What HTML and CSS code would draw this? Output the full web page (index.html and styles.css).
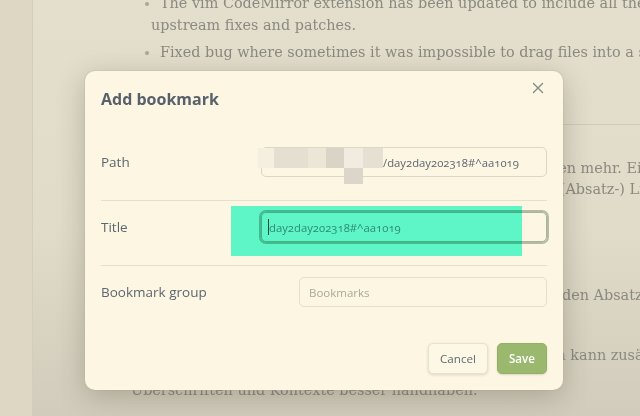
FILE: index.html
```html
<!DOCTYPE html>
<html>
<head>
<meta charset="utf-8">
<link rel="stylesheet" href="styles.css">
</head>
<body>
<div class="app">
  <aside class="gutter"></aside>
  <main class="doc">
    <ul class="changes">
      <li>The vim CodeMirror extension has been updated to include all the<br>upstream fixes and patches.</li>
      <li>Fixed bug where sometimes it was impossible to drag files into a split pane.</li>
    </ul>
    <hr class="rule">
    <p class="para p1">Beim Einfügen von Listen gibt es keine doppelten Leerzeilen mehr. Eine<br>Zeile kann jetzt sogar ohne vorherigen Zeilenumbruch als (Absatz-) Link</p>
    <p class="para p2">Blockverweise lassen sich somit bequem unmittelbar über den Absatz setzen.</p>
    <p class="para p3">Beim Verlinken von Abschnitten und von einzelnen Blöcken kann zusätzlich</p>
    <p class="para p4">Überschriften und Kontexte besser handhaben.</p>
  </main>
</div>

<div class="modal">
  <div class="modal-head">
    <h2 class="modal-title">Add bookmark</h2>
    <svg class="close" viewBox="0 0 12 12" width="12" height="12"><path d="M1.5 1.5 L10.5 10.5 M10.5 1.5 L1.5 10.5" stroke="#7f8e87" stroke-width="1.4" stroke-linecap="round" fill="none"/></svg>
  </div>
  <div class="setting">
    <div class="label">Path</div>
    <div class="field field-path">
      <span class="mosaic">
        <span class="m m1"></span><span class="m m2"></span><span class="m m3"></span><span class="m m4"></span><span class="m m5"></span><span class="m m6"></span><span class="m m7"></span>
      </span>
      <span class="value">/day2day202318#^aa1019</span>
    </div>
  </div>
  <div class="setting">
    <div class="label">Title</div>
    <div class="field field-title focused">
      <span class="caret"></span><span class="value dim">day2day202318#^aa1019</span>
    </div>
  </div>
  <div class="setting last">
    <div class="label">Bookmark group</div>
    <div class="field field-group"><span class="placeholder">Bookmarks</span></div>
  </div>
  <div class="buttons">
    <button class="btn cancel">Cancel</button>
    <button class="btn save">Save</button>
  </div>
</div>
<div class="highlight"></div>
</body>
</html>
```
FILE: styles.css
```css
html, body {
  margin: 0;
  padding: 0;
}
body {
  width: 640px;
  height: 416px;
  overflow: hidden;
  position: relative;
  background: #e2dccb;
}
.app {
  display: flex;
  height: 416px;
  background: linear-gradient(180deg, #e4dfcd 0%, #e1dbc9 55%, #d1ccbb 100%);
}
.gutter {
  width: 32px;
  flex: none;
  background: #ddd7c4;
  border-right: 1px solid #d3cdba;
}
.doc {
  flex: 1;
  padding-left: 98px;
  font-family: "DejaVu Serif", serif;
  font-size: 14.4px;
  line-height: 21px;
  color: #8b8a80;
  white-space: nowrap;
  overflow: hidden;
}
.changes {
  list-style: none;
  margin: -8px 0 0 0;
  padding: 0 0 0 20px;
  line-height: 22px;
}
.changes li {
  position: relative;
  text-indent: 9px;
}
.changes li + li {
  margin-top: 5px;
}
.changes li::before {
  content: "";
  position: absolute;
  left: -6px;
  top: 10px;
  width: 4px;
  height: 4px;
  border-radius: 50%;
  background: #a9a799;
}
.rule {
  margin: 61px 0 0 0;
  border: 0;
  border-top: 1px solid #d0cab8;
  height: 0;
}
.para {
  margin: 0;
  line-height: 21px;
}
.p1 { margin-top: 33px; }
.p2 { margin-top: 85px; }
.p3 { margin-top: 39px; }
.p4 { margin-top: 14px; }

.modal {
  position: absolute;
  left: 85px;
  top: 71px;
  width: 446px;
  padding: 16px;
  background: #fdf6e3;
  border-radius: 10px;
  box-shadow: 0 6px 28px rgba(60, 55, 35, 0.28), 0 0 0 1px rgba(200, 195, 175, 0.35);
  font-family: "Open Sans", sans-serif;
  color: #5c6670;
}
.modal-head {
  display: flex;
  justify-content: space-between;
  align-items: flex-start;
  height: 24px;
  margin-bottom: 25px;
}
.modal-title {
  margin: 0;
  font-size: 16px;
  line-height: 24px;
  font-weight: 700;
  color: #56616b;
}
.close {
  margin-top: -5px;
  margin-right: 3px;
}
.setting {
  display: flex;
  align-items: center;
  justify-content: space-between;
  padding: 11px 0 23px;
  border-bottom: 1px solid #e6dfcb;
}
.setting.last {
  border-bottom: 0;
}
.label {
  font-size: 13.5px;
}
.field {
  position: relative;
  box-sizing: border-box;
  height: 30px;
  border: 1px solid #dcd7c4;
  border-radius: 5px;
  display: flex;
  align-items: center;
  padding: 0 9px;
  font-size: 11.3px;
  color: #5c6670;
  font-variant-numeric: oldstyle-nums;
}
.field-path {
  width: 286px;
  padding-left: 121px;
}
.field-title {
  width: 286px;
  padding-left: 6px;
}
.field-group {
  width: 248px;
  border-color: #e3dfcd;
  font-size: 11.5px;
}
.focused {
  border: 1px solid #aab39c;
  box-shadow: 0 0 0 2px #b3bba4;
}
.caret {
  width: 1px;
  height: 16px;
  background: #3e4850;
}
.value.dim {
  color: #7c8a86;
}
.placeholder {
  color: #a8a99b;
}
.mosaic {
  position: absolute;
  left: -4px;
  top: 0;
  width: 125px;
  height: 36px;
}
.m {
  position: absolute;
  top: 0;
  height: 20px;
}
.m1 { left: 0; width: 16px; background: #f5efdf; }
.m2 { left: 16px; width: 34px; background: #e5dfd1; }
.m3 { left: 50px; width: 18px; background: #ece6d7; }
.m4 { left: 68px; width: 18px; background: #d9d4c6; }
.m5 { left: 86px; width: 19px; background: #f1ecdf; }
.m6 { left: 105px; width: 20px; background: #e6e0d2; }
.m7 { left: 86px; top: 20px; width: 19px; height: 16px; background: #dcd6ca; }

.buttons {
  display: flex;
  justify-content: flex-end;
  gap: 9px;
  padding-top: 13px;
}
.btn {
  height: 31px;
  border-radius: 5px;
  font-family: "Open Sans", sans-serif;
  font-size: 11.6px;
  padding: 0;
  cursor: pointer;
}
.cancel {
  width: 60px;
  background: #fdf7e5;
  border: 1px solid #e7e1cd;
  color: #5f6a73;
  box-shadow: 0 1px 3px rgba(80, 70, 40, 0.18);
}
.save {
  width: 50px;
  background: #9ab86e;
  border: 1px solid #92b066;
  color: #ffffff;
  font-weight: 600;
  box-shadow: 0 1px 2px rgba(80, 90, 40, 0.2);
}
.highlight {
  position: absolute;
  left: 231px;
  top: 206px;
  width: 291px;
  height: 50px;
  background: #5fffdf;
  mix-blend-mode: multiply;
}
```
